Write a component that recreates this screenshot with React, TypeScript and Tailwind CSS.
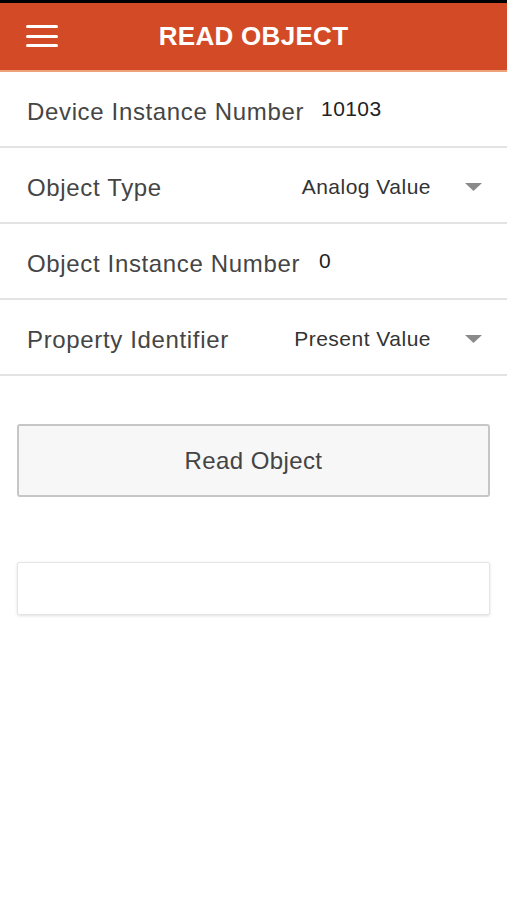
import React from "react";

const font = { fontFamily: '"Liberation Sans", Arial, sans-serif' };

function Caret() {
  return (
    <svg width="17" height="8" viewBox="0 0 17 8" className="shrink-0">
      <polygon points="0,0 17,0 8.5,8" fill="#8a8a8a" />
    </svg>
  );
}

function InputRow({ label, value, valueX }: { label: string; value: string; valueX: string }) {
  return (
    <div className="flex h-[76px] items-center border-b-2 border-[#e3e3e3] pl-[27px] pt-[3px]">
      <span className="pt-[2px] text-[24px] tracking-[0.65px] text-[#454545]">{label}</span>
      <span className={`text-[21px] tracking-[0.4px] text-[#222] -mt-[4px] ${valueX}`}>{value}</span>
    </div>
  );
}

function SelectRow({ label, value }: { label: string; value: string }) {
  return (
    <div className="flex h-[76px] items-center border-b-2 border-[#e3e3e3] pl-[27px] pr-[25px] pt-[3px]">
      <span className="flex-1 pt-[2px] text-[24px] tracking-[0.65px] text-[#454545]">{label}</span>
      <span className="mr-[34px] text-[21px] tracking-[0.5px] text-[#333]">{value}</span>
      <Caret />
    </div>
  );
}

export default function App() {
  return (
    <div className="h-[900px] w-[507px] bg-white" style={font}>
      <div className="h-[3px] bg-black" />
      <div className="relative flex h-[67px] items-center justify-center bg-[#d34a26]">
        <div className="absolute left-[26px] top-[22px] flex w-[32px] flex-col gap-[6.5px]">
          <div className="h-[3px] rounded-full bg-white" />
          <div className="h-[3px] rounded-full bg-white" />
          <div className="h-[3px] rounded-full bg-white" />
        </div>
        <span className="text-[26px] font-bold tracking-[0.3px] text-white">READ OBJECT</span>
      </div>
      <div className="h-[2px] bg-[#eea27a]" />
      <div>
        <InputRow label="Device Instance Number" value="10103" valueX="ml-[17px]" />
        <SelectRow label="Object Type" value="Analog Value" />
        <InputRow label="Object Instance Number" value="0" valueX="ml-[19px]" />
        <SelectRow label="Property Identifier" value="Present Value" />
      </div>
      <div className="px-[17px] pt-[48px]">
        <button className="flex h-[73px] w-full items-center justify-center rounded-[3px] border-2 border-[#c6c6c6] bg-[#f7f7f7] text-[24px] tracking-[0.4px] text-[#444]">
          Read Object
        </button>
        <div className="mt-[65px] h-[53px] w-full rounded-[2px] border border-[#e4e4e4] bg-white shadow-[0_1px_3px_rgba(0,0,0,0.12)]" />
      </div>
    </div>
  );
}
